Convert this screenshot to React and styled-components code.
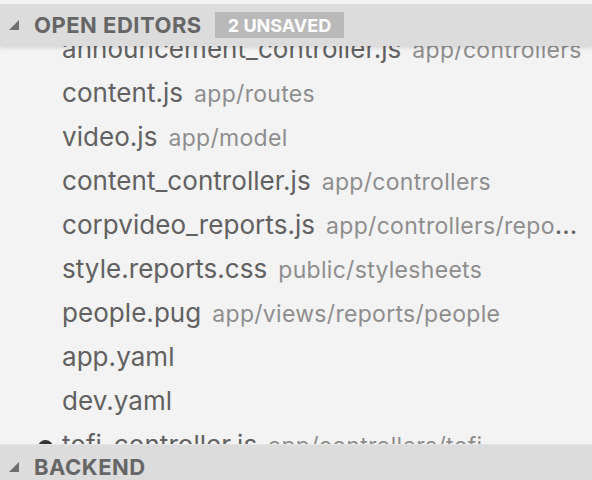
import React from 'react';
import styled, { createGlobalStyle } from 'styled-components';


const GlobalStyle = createGlobalStyle`
  html, body {
    margin: 0;
    padding: 0;
    background: #f3f3f3;
  }
  body {
    font-family: Inter, "Liberation Sans", sans-serif;
  }
`;


const Pane = styled.div`
  display: flex;
  flex-direction: column;
  width: 592px;
  height: 480px;
  padding-top: 4px;
  box-sizing: border-box;
  overflow: hidden;
  background: #f3f3f3;
`;

const Section = styled.div`
  flex: 0 0 440px;
  display: flex;
  flex-direction: column;
  overflow: hidden;
`;

const Header = styled.div`
  position: relative;
  z-index: 1;
  flex-shrink: 0;
  display: flex;
  align-items: center;
  height: ${(props) => props.height}px;
  padding-left: 9px;
  background: #dcdcdc;
  box-shadow: ${(props) => (props.shadow ? '0 2px 4px rgba(0, 0, 0, 0.12)' : 'none')};
  border-top: ${(props) => (props.shadow ? 'none' : '1px solid #e4e4e4')};
  box-sizing: border-box;
`;

const Twistie = styled.svg`
  width: 10px;
  height: 10px;
  margin-right: 15px;
  fill: #6f6f6f;
`;

const Title = styled.span`
  font-size: 22px;
  font-weight: 700;
  color: #666666;
  letter-spacing: 0.5px;
`;

const Badge = styled.span`
  display: inline-flex;
  align-items: center;
  height: 26px;
  margin-left: 13px;
  padding: 0 13px;
  background: #b9b9b9;
  color: #ffffff;
  font-size: 18px;
  font-weight: 700;
`;

const List = styled.div`
  margin-top: -18px;
`;

const Row = styled.div`
  display: flex;
  align-items: center;
  height: 44px;
  padding: 0 10px 3px 0;
  box-sizing: border-box;
`;

const Slot = styled.div`
  flex-shrink: 0;
  display: flex;
  align-items: center;
  width: 62px;
  padding-left: 38px;
  box-sizing: border-box;
`;

const Dot = styled.span`
  width: 15px;
  height: 15px;
  margin-top: 5px;
  border-radius: 50%;
  background: #333333;
`;

const Label = styled.div`
  flex: 1;
  min-width: 0;
  white-space: nowrap;
  overflow: hidden;
  text-overflow: ellipsis;
  font-size: 26px;
  letter-spacing: 0.05px;
  color: #616161;
`;

const Path = styled.span`
  margin-left: 11px;
  font-size: 23px;
  letter-spacing: 0.3px;
  color: #8e8e8e;
`;


const editors = [
  { name: 'announcement_controller.js', path: 'app/controllers' },
  { name: 'content.js', path: 'app/routes' },
  { name: 'video.js', path: 'app/model' },
  { name: 'content_controller.js', path: 'app/controllers' },
  { name: 'corpvideo_reports.js', path: 'app/controllers/reports' },
  { name: 'style.reports.css', path: 'public/stylesheets' },
  { name: 'people.pug', path: 'app/views/reports/people' },
  { name: 'app.yaml' },
  { name: 'dev.yaml' },
  { name: 'tofi_controller.js', path: 'app/controllers/tofi', dirty: true },
];


function Chevron() {
  return (
    <Twistie viewBox="0 0 10 10">
      <polygon points="0,10 10,10 10,0" />
    </Twistie>
  );
}


export default function App() {
  return (
    <>
      <GlobalStyle />
      <Pane>
        <Section>
          <Header height={42} shadow>
            <Chevron />
            <Title>OPEN EDITORS</Title>
            <Badge>2 UNSAVED</Badge>
          </Header>
          <List>
            {editors.map((file) => (
              <Row key={file.name}>
                <Slot>{file.dirty && <Dot />}</Slot>
                <Label>
                  {file.name}
                  {file.path && <Path>{file.path}</Path>}
                </Label>
              </Row>
            ))}
          </List>
        </Section>
        <Header height={44}>
          <Chevron />
          <Title>BACKEND</Title>
        </Header>
      </Pane>
    </>
  );
}
